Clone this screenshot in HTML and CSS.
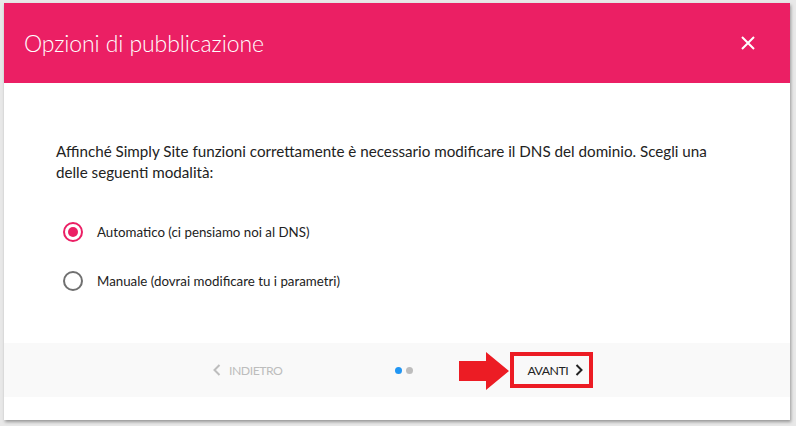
FILE: index.html
```html
<!DOCTYPE html>
<html>

<head>
    <meta charset="utf-8">
    <title>Opzioni di pubblicazione</title>
    <link rel="stylesheet" href="styles.css">
</head>

<body>
    <div class="modal">
        <div class="modal-header">
            <h1>Opzioni di pubblicazione</h1>
            <button class="close-btn" type="button" aria-label="Chiudi">
                <svg width="14" height="14" viewBox="0 0 14 14">
                    <path d="M1 1 L13 13 M13 1 L1 13" stroke="#fff" stroke-width="2" fill="none"/>
                </svg>
            </button>
        </div>

        <div class="modal-body">
            <p class="intro">Affinché Simply Site funzioni correttamente è necessario modificare il DNS del dominio. Scegli una delle seguenti modalità:</p>

            <label class="radio checked">
                <span class="radio-mark"></span>
                Automatico (ci pensiamo noi al DNS)
            </label>
            <label class="radio">
                <span class="radio-mark"></span>
                Manuale (dovrai modificare tu i parametri)
            </label>
        </div>

        <div class="modal-footer">
            <button class="nav-btn back-btn" type="button">
                <svg width="8" height="12" viewBox="0 0 8 12">
                    <path d="M6.5 1 L1.5 6 L6.5 11" stroke="currentColor" stroke-width="2" fill="none"/>
                </svg>
                INDIETRO
            </button>

            <div class="steps">
                <span class="dot active"></span>
                <span class="dot"></span>
            </div>

            <div class="next-wrap">
                <svg class="annot-arrow" width="50" height="38" viewBox="0 0 50 38">
                    <path d="M0 9 H27 V0 L50 19 L27 38 V29 H0 Z" fill="#ec1c24"/>
                </svg>
                <button class="nav-btn next-btn" type="button">
                    AVANTI
                    <svg width="8" height="12" viewBox="0 0 8 12">
                        <path d="M1.5 1 L6.5 6 L1.5 11" stroke="currentColor" stroke-width="2" fill="none"/>
                    </svg>
                </button>
            </div>
        </div>
    </div>
</body>

</html>
```

FILE: styles.css
```css
body {
    font-family: "Source Sans Pro", Lato, "Liberation Sans", sans-serif;
    background-color: #e8e8e8;
    margin: 0;
    padding: 3px 6px 6px 4px;
}

.modal {
    background-color: white;
    box-shadow: 1px 2px 3px rgba(0, 0, 0, 0.35);
    height: 417px;
    display: flex;
    flex-direction: column;
}

.modal-header {
    background-color: #eb1f64;
    height: 80px;
    display: flex;
    align-items: center;
    justify-content: space-between;
    padding: 0 35px 0 20px;
}

h1 {
    margin: 0;
    color: white;
    font-weight: 300;
    font-size: 23px;
    letter-spacing: -0.1px;
}

.close-btn {
    background: none;
    border: none;
    padding: 0;
    width: 14px;
    height: 14px;
    cursor: pointer;
    display: flex;
}

.modal-body {
    padding: 58px 60px 0 52px;
    height: 200px;
    color: #222;
    font-size: 15.2px;
}

.intro {
    margin: 0 0 35px;
    line-height: 21px;
}

.radio {
    display: flex;
    align-items: center;
    gap: 14px;
    height: 28px;
    margin-bottom: 21px;
    padding-left: 7px;
    font-size: 13.3px;
    cursor: pointer;
}

.radio-mark {
    width: 20px;
    height: 20px;
    border: 2px solid #707070;
    border-radius: 50%;
    box-sizing: border-box;
    display: flex;
    align-items: center;
    justify-content: center;
}

.radio.checked .radio-mark {
    border-color: #eb1f64;
}

.radio.checked .radio-mark::after {
    content: "";
    width: 10px;
    height: 10px;
    border-radius: 50%;
    background-color: #eb1f64;
}

.modal-footer {
    margin-top: auto;
    margin-bottom: 23px;
    height: 54px;
    background-color: #f9f9f9;
    display: flex;
    align-items: center;
    padding-left: 209px;
}

.nav-btn {
    background: none;
    border: none;
    font-family: inherit;
    font-size: 12.3px;
    letter-spacing: -0.5px;
    display: flex;
    align-items: center;
    gap: 8px;
    padding: 0;
    cursor: pointer;
}

.back-btn {
    color: #bdbdbd;
}

.steps {
    display: flex;
    gap: 4px;
    margin-left: 113px;
}

.dot {
    width: 7px;
    height: 7px;
    border-radius: 50%;
    background-color: #bdbdbd;
}

.dot.active {
    background-color: #2196f3;
}

.next-wrap {
    position: relative;
    margin-left: 97px;
}

.annot-arrow {
    position: absolute;
    left: -51px;
    top: 0;
}

.next-btn {
    color: #222;
    border: 4px solid #ec1c24;
    height: 36px;
    box-sizing: border-box;
    padding: 0 6px 0 13px;
    gap: 7px;
}
```
